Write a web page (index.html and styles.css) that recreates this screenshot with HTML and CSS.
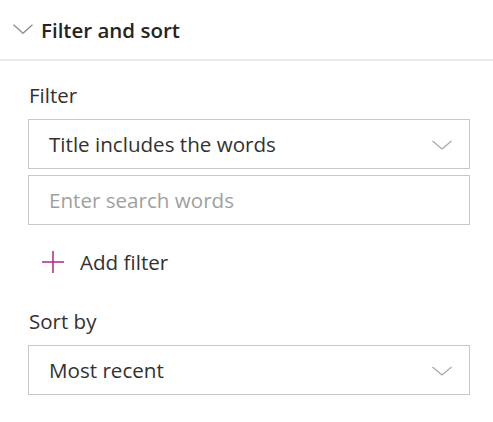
FILE: index.html
```html
<!DOCTYPE html>
<html>
<head>
<meta charset="utf-8">
<link rel="stylesheet" href="styles.css">
</head>
<body>
<div class="panel">
  <div class="header">
    <svg class="hchev" width="20" height="10" viewBox="0 0 20 10"><path d="M0.5 0.8 L10 9.3 L19.5 0.8" fill="none" stroke="#8a8a8a" stroke-width="1.2"/></svg>
    <span class="title">Filter and sort</span>
  </div>
  <div class="body">
    <div class="label">Filter</div>
    <div class="box select">
      <span class="value">Title includes the words</span>
      <svg class="chev" width="20" height="10" viewBox="0 0 20 10"><path d="M0.5 1 L10 9 L19.5 1" fill="none" stroke="#a6a6a6" stroke-width="1.2"/></svg>
    </div>
    <div class="box input">
      <span class="placeholder">Enter search words</span>
    </div>
    <div class="add">
      <svg class="plus" width="24" height="24" viewBox="0 0 24 24"><path d="M12 1 V23 M1 12 H23" stroke="#b4248f" stroke-width="1.5" fill="none"/></svg>
      <span class="addtext">Add filter</span>
    </div>
    <div class="label sort">Sort by</div>
    <div class="box select">
      <span class="value">Most recent</span>
      <svg class="chev" width="20" height="10" viewBox="0 0 20 10"><path d="M0.5 1 L10 9 L19.5 1" fill="none" stroke="#a6a6a6" stroke-width="1.2"/></svg>
    </div>
  </div>
</div>
</body>
</html>
```
FILE: styles.css
```css
html, body {
  margin: 0;
  padding: 0;
  background: #ffffff;
}
body {
  font-family: "Open Sans", "Noto Sans", sans-serif;
  color: #323130;
}
.panel {
  width: 493px;
}
.header {
  display: flex;
  align-items: center;
  padding-left: 13px;
  border-bottom: 2px solid #ebebeb;
  box-sizing: border-box;
  height: 61px;
}
.hchev {
  margin-right: 8px;
  margin-top: -2px;
}
.title {
  font-size: 20.5px;
  font-weight: 600;
  color: #252423;
}
.body {
  padding: 21px 23px 0 28px;
}
.label {
  font-size: 20.5px;
  line-height: 26px;
  margin-left: 1px;
  margin-bottom: 11px;
}
.box {
  display: flex;
  align-items: center;
  justify-content: space-between;
  height: 50px;
  border: 1px solid #c8c8c8;
  box-sizing: border-box;
  padding: 0 17px 0 20px;
  font-size: 20.6px;
}
.input {
  margin-top: 6px;
}
.placeholder {
  color: #a19f9d;
}
.chev {
  margin-top: 1px;
}
.add {
  display: flex;
  align-items: center;
  height: 24px;
  margin: 25px 0 0 13px;
}
.plus {
  margin-right: 15px;
}
.addtext {
  font-size: 20.6px;
}
.label.sort {
  margin-top: 34px;
  margin-bottom: 11px;
}
```
